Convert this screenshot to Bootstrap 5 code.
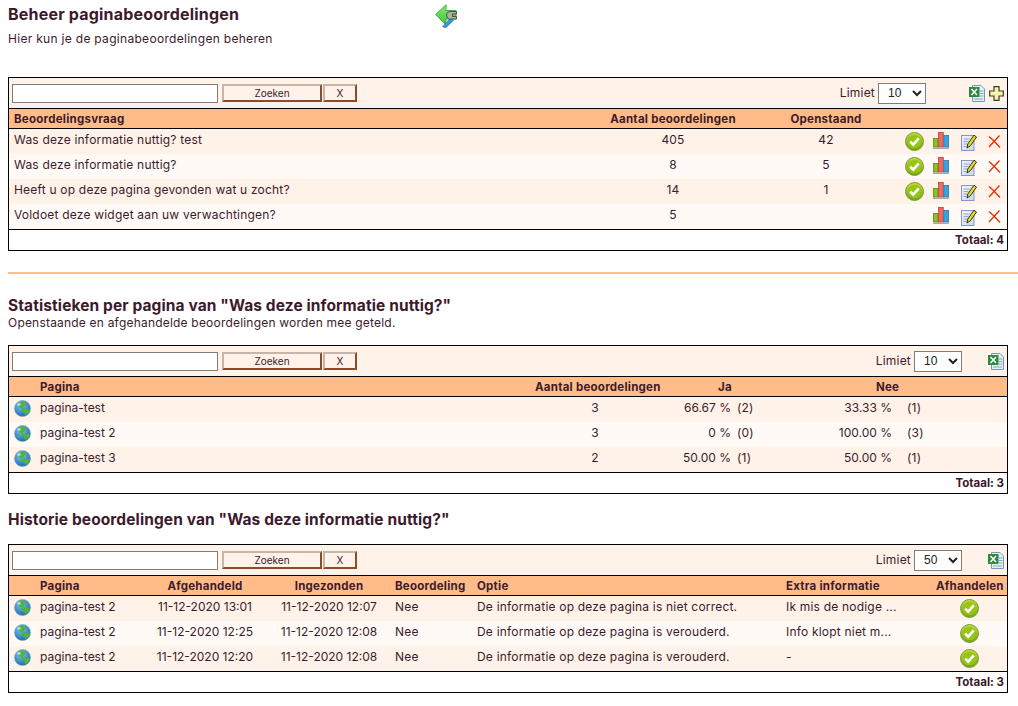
<!DOCTYPE html>
<html lang="nl"><head><meta charset="utf-8"><title>Beheer paginabeoordelingen</title>
<link href="https://cdn.jsdelivr.net/npm/bootstrap@5.3.0/dist/css/bootstrap.min.css" rel="stylesheet">
<style>
body{background:#fff;color:#3c1a2c;font-family:Inter,"Noto Sans",sans-serif;font-size:12px;letter-spacing:.2px;line-height:14px;padding:0 0 0 8px;margin:0;overflow:hidden}
.page-top{height:77px}
.top-head{width:427px}
.ttl{font-size:16px;font-weight:700;letter-spacing:.2px;line-height:20px;margin:0;padding-top:4px}
.ttl2{font-size:15.5px;font-weight:700;letter-spacing:.1px;line-height:20px;margin:0}
.sub{line-height:14px;margin-top:8px;letter-spacing:.3px}
.sep{height:2px;background:#ffbe8c;margin:21px 0 0 0;border:0;opacity:1}
.pane{width:1000px;border:1px solid #000;background:#fff}
.tools{height:31px;background:#fff2e8;border-bottom:1px solid #000;padding:0 3px}
.qbox{width:206px;height:19px;border:1px solid #807c7c;background:#fff;padding:0;margin-right:4px}
.qbtn{height:18px;background:#fff2e8;border:2px solid;border-color:#c8b4a8 #8c4c2c #8c4c2c #c8b4a8;color:#3c1a2c;font-size:10px;line-height:12px;padding:0;font-family:inherit;margin-right:1px}
.w100{width:100px}.w34{width:34px}
.lim{height:21px;width:48px;margin-left:3px;border:1px solid #807c7c;background:#fff;color:#222;font-family:"Liberation Sans",sans-serif;font-size:12px;letter-spacing:0;padding:0 0 0 5px}
.gap-a{margin-left:43px;margin-right:4px}
.gap-b{margin-left:26px}
.grid-t{width:100%;table-layout:fixed;border-collapse:separate;border-spacing:0}
.grid-t th{background:#ffbc88;height:20px;padding:0 5px;font-weight:700;font-size:11.5px;letter-spacing:.25px;border-bottom:1px solid #000;white-space:nowrap;overflow:visible}
.grid-t td{height:25px;padding:0 5px 3px;white-space:nowrap;overflow:hidden;vertical-align:middle}
.grid-t tr:nth-child(odd) td{background:#fff2e8}
.grid-t tr:nth-child(even) td{background:#fffaf6}
.grid-t td.ic0{padding:0 0 2px 5px}
.grid-t td.acts{padding:0 6px 0 0;overflow:visible}
.grid-t td.ic-c{padding:0;overflow:visible}
.grid-t .shift-c{padding-left:7px;padding-right:3px}
.plain{letter-spacing:0}
.t-foot{height:21px;border-top:1px solid #000;text-align:right;font-weight:700;letter-spacing:0;font-size:11.5px;padding:3px 3px 0 0;line-height:14px}
.sec-head{margin-top:22px}
.sec-sub{line-height:14px;margin-top:0;margin-bottom:15px}
.ico{display:block;flex:none}
.act-row{display:flex;align-items:center;justify-content:flex-end}
.g9{margin-left:9px}.g12{margin-left:12px}.g11{margin-left:11px}
.up3{margin-bottom:3px}
.dn1{margin-top:1px}
.pct{display:inline-block;text-align:right;letter-spacing:0}
.pj{width:66px}.pn{width:97px}
.cnt{display:inline-block;margin-left:6px}
.cnt2{display:inline-block;margin-left:15px}
.sec3{margin-top:16px}
.sec3 .ttl2{margin-bottom:14px}
</style></head><body>
<svg width="0" height="0" class="position-absolute">
<defs>
<linearGradient id="gc" x1="0" y1="0" x2="0" y2="1"><stop offset="0" stop-color="#c4dc34"/><stop offset="1" stop-color="#6fa50f"/></linearGradient>
<radialGradient id="gg" cx=".4" cy=".3" r=".75"><stop offset="0" stop-color="#7cc8f4"/><stop offset="1" stop-color="#1766ac"/></radialGradient>
<linearGradient id="gn" x1="0" y1="0" x2="1" y2="1"><stop offset="0" stop-color="#f2f6fc"/><stop offset="1" stop-color="#c4d6ee"/></linearGradient>
<linearGradient id="ga" x1="0" y1="0" x2="0" y2="1"><stop offset="0" stop-color="#86ec64"/><stop offset="1" stop-color="#3cc244"/></linearGradient>
<symbol id="i-ok" viewBox="0 0 19 19"><circle cx="9.500" cy="9.500" r="9" fill="url(#gc)" stroke="#7d9c3a"/><circle cx="9.500" cy="9.500" r="6.800" fill="#97c418"/><path d="M5.200 9.700l3 3 5.600-6.400" fill="none" stroke="#fff" stroke-width="2.600"/></symbol>
<symbol id="i-bar" viewBox="0 0 16 17"><rect x=".4" y="6.500" width="4.600" height="8.500" fill="#8cc21f" stroke="#5d8a18" stroke-width=".8"/><rect x="5.500" y=".5" width="4.800" height="14.500" fill="#f4685a" stroke="#b8483c" stroke-width=".8"/><rect x="10.800" y="3.500" width="4.800" height="11.500" fill="#35a5e6" stroke="#2a78a8" stroke-width=".8"/><rect x="0" y="15.500" width="16" height="1.500" fill="#a8a8a8"/></symbol>
<symbol id="i-note" viewBox="0 0 16 17"><rect x=".5" y="1.500" width="12.500" height="15" fill="url(#gn)" stroke="#8a94c4"/><path d="M2.500 5h6M2.500 7.500h5M2.500 10h4M2.500 12.500h3" stroke="#9aa8c8"/><path d="M6 14l.8-4L13 1.200l2.500 1.800-6 8.600z" fill="#ecdc1c" stroke="#1c1c1c" stroke-width=".9"/></symbol>
<symbol id="i-x" viewBox="0 0 13 13"><path d="M1 1.500l5 4.500 6 6.500M11.500 .5L6 6.500 1 12" stroke="#f02c00" stroke-width="1.300" fill="none"/></symbol>
<symbol id="i-xl" viewBox="0 0 16 17"><path d="M3.500.5H12l3.500 3.500V16.500H3.500z" fill="#e6eef8" stroke="#7c96b8"/><path d="M11 6h3.500M11 8.500h3.500M11 11h3.500M5 14h9" stroke="#8ab"/><rect x="0" y="2" width="10.500" height="10" fill="#2d8a3c"/><path d="M2.500 4l5.500 6M8 4l-5.500 6" stroke="#fff" stroke-width="1.500"/></symbol>
<symbol id="i-plus" viewBox="0 0 15 15"><path d="M5 .7h5V5h4.300v5H10v4.300H5V10H.7V5H5z" fill="#f8f2b0" stroke="#3c3c20" stroke-width="1.200"/></symbol>
<symbol id="i-globe" viewBox="0 0 17 17"><circle cx="8.500" cy="8.500" r="8" fill="url(#gg)" stroke="#7ba0b8" stroke-width=".6"/><path d="M6 2c3-1 5-.5 6 1l-1.500 2.500L9 8l2.500 1.500 3.500-1 .8 1.500c-.8 2.500-2.300 4.500-4.800 5l-.8-3-2.500-1-.3-2.500-3-1.500z" fill="#52b33a"/><ellipse cx="5" cy="4.500" rx="2" ry="1.200" fill="#cfeeff" opacity=".7"/></symbol>
<symbol id="i-back" viewBox="0 0 22 24"><path d="M.6 10.500L11 .8V6.500h10v8.500H11v6z" fill="url(#ga)" stroke="#37a83c" stroke-width=".9"/><path d="M7.500 22.500l8-8.500 3 2.500-8 7.500z" fill="#3b97d8" stroke="#2a6fa8" stroke-width=".6"/><path d="M21.500 7.500h-4.500a4 4 0 1 0 0 7.500h4.500v-2.500h-4v-2.500h4z" fill="#a8b0a4" stroke="#3c463c" stroke-width=".9"/></symbol>
</defs></svg>

<div class="page-top d-flex">
  <div class="top-head"><h1 class="ttl">Beheer paginabeoordelingen</h1><div class="sub">Hier kun je de paginabeoordelingen beheren</div></div>
  <svg class="ico mt-1" width="22" height="24"><use href="#i-back"/></svg>
</div>

<section class="pane">
  <div class="tools d-flex align-items-center">
    <input class="qbox" type="text" aria-label="Zoeken"><button class="qbtn w100">Zoeken</button><button class="qbtn w34">X</button>
    <span class="ms-auto">Limiet</span><select class="lim"><option>10</option></select>
    <svg class="ico gap-a" width="16" height="17"><use href="#i-xl"/></svg><svg class="ico" width="15" height="15"><use href="#i-plus"/></svg>
  </div>
  <table class="grid-t"><colgroup><col style="width:586px"><col style="width:156px"><col style="width:150px"><col></colgroup>
    <thead><tr><th>Beoordelingsvraag</th><th class="text-center">Aantal beoordelingen</th><th class="text-center">Openstaand</th><th></th></tr></thead>
    <tbody>
    <tr><td>Was deze informatie nuttig? test</td><td class="text-center">405</td><td class="text-center">42</td><td class="acts"><div class="act-row"><svg class="ico" width="19" height="19"><use href="#i-ok"/></svg><svg class="ico g9 up3" width="16" height="17"><use href="#i-bar"/></svg><svg class="ico g12 dn1" width="16" height="17"><use href="#i-note"/></svg><svg class="ico g11" width="13" height="13"><use href="#i-x"/></svg></div></td></tr>
    <tr><td>Was deze informatie nuttig?</td><td class="text-center">8</td><td class="text-center">5</td><td class="acts"><div class="act-row"><svg class="ico" width="19" height="19"><use href="#i-ok"/></svg><svg class="ico g9 up3" width="16" height="17"><use href="#i-bar"/></svg><svg class="ico g12 dn1" width="16" height="17"><use href="#i-note"/></svg><svg class="ico g11" width="13" height="13"><use href="#i-x"/></svg></div></td></tr>
    <tr><td>Heeft u op deze pagina gevonden wat u zocht?</td><td class="text-center">14</td><td class="text-center">1</td><td class="acts"><div class="act-row"><svg class="ico" width="19" height="19"><use href="#i-ok"/></svg><svg class="ico g9 up3" width="16" height="17"><use href="#i-bar"/></svg><svg class="ico g12 dn1" width="16" height="17"><use href="#i-note"/></svg><svg class="ico g11" width="13" height="13"><use href="#i-x"/></svg></div></td></tr>
    <tr><td>Voldoet deze widget aan uw verwachtingen?</td><td class="text-center">5</td><td></td><td class="acts"><div class="act-row"><svg class="ico up3" width="16" height="17"><use href="#i-bar"/></svg><svg class="ico g12 dn1" width="16" height="17"><use href="#i-note"/></svg><svg class="ico g11" width="13" height="13"><use href="#i-x"/></svg></div></td></tr>
    </tbody></table>
  <div class="t-foot">Totaal: 4</div>
</section>

<hr class="sep">

<div class="sec-head"><h2 class="ttl2">Statistieken per pagina van "Was deze informatie nuttig?"</h2><div class="sec-sub">Openstaande en afgehandelde beoordelingen worden mee geteld.</div></div>
<section class="pane">
  <div class="tools d-flex align-items-center">
    <input class="qbox" type="text" aria-label="Zoeken"><button class="qbtn w100">Zoeken</button><button class="qbtn w34">X</button>
    <span class="ms-auto">Limiet</span><select class="lim"><option>10</option></select>
    <svg class="ico gap-b" width="16" height="17"><use href="#i-xl"/></svg>
  </div>
  <table class="grid-t"><colgroup><col style="width:26px"><col style="width:495px"><col style="width:130px"><col style="width:130px"><col style="width:195px"><col></colgroup>
    <thead><tr><th></th><th>Pagina</th><th class="text-center">Aantal beoordelingen</th><th class="text-center">Ja</th><th class="text-center">Nee</th><th></th></tr></thead>
    <tbody>
    <tr><td class="ic0"><svg class="ico" width="17" height="17"><use href="#i-globe"/></svg></td><td class="plain">pagina-test</td><td class="text-center">3</td><td><span class="pct pj">66.67 %</span><span class="cnt">(2)</span></td><td><span class="pct pn">33.33 %</span><span class="cnt2">(1)</span></td><td></td></tr>
    <tr><td class="ic0"><svg class="ico" width="17" height="17"><use href="#i-globe"/></svg></td><td class="plain">pagina-test 2</td><td class="text-center">3</td><td><span class="pct pj">0 %</span><span class="cnt">(0)</span></td><td><span class="pct pn">100.00 %</span><span class="cnt2">(3)</span></td><td></td></tr>
    <tr><td class="ic0"><svg class="ico" width="17" height="17"><use href="#i-globe"/></svg></td><td class="plain">pagina-test 3</td><td class="text-center">2</td><td><span class="pct pj">50.00 %</span><span class="cnt">(1)</span></td><td><span class="pct pn">50.00 %</span><span class="cnt2">(1)</span></td><td></td></tr>
    </tbody></table>
  <div class="t-foot">Totaal: 3</div>
</section>

<div class="sec3"><h2 class="ttl2">Historie beoordelingen van "Was deze informatie nuttig?"</h2></div>
<section class="pane">
  <div class="tools d-flex align-items-center">
    <input class="qbox" type="text" aria-label="Zoeken"><button class="qbtn w100">Zoeken</button><button class="qbtn w34">X</button>
    <span class="ms-auto">Limiet</span><select class="lim"><option>50</option></select>
    <svg class="ico gap-b" width="16" height="17"><use href="#i-xl"/></svg>
  </div>
  <table class="grid-t"><colgroup><col style="width:26px"><col style="width:111px"><col style="width:118px"><col style="width:126px"><col style="width:82px"><col style="width:309px"><col style="width:150px"><col></colgroup>
    <thead><tr><th></th><th>Pagina</th><th class="text-center">Afgehandeld</th><th class="text-center shift-c">Ingezonden</th><th>Beoordeling</th><th>Optie</th><th>Extra informatie</th><th class="text-center">Afhandelen</th></tr></thead>
    <tbody>
    <tr><td class="ic0"><svg class="ico" width="17" height="17"><use href="#i-globe"/></svg></td><td class="plain">pagina-test 2</td><td class="text-center plain">11-12-2020 13:01</td><td class="text-center plain shift-c">11-12-2020 12:07</td><td>Nee</td><td>De informatie op deze pagina is niet correct.</td><td>Ik mis de nodige ...</td><td class="ic-c"><div class="d-flex justify-content-center"><svg class="ico" width="19" height="19"><use href="#i-ok"/></svg></div></td></tr>
    <tr><td class="ic0"><svg class="ico" width="17" height="17"><use href="#i-globe"/></svg></td><td class="plain">pagina-test 2</td><td class="text-center plain">11-12-2020 12:25</td><td class="text-center plain shift-c">11-12-2020 12:08</td><td>Nee</td><td>De informatie op deze pagina is verouderd.</td><td>Info klopt niet m...</td><td class="ic-c"><div class="d-flex justify-content-center"><svg class="ico" width="19" height="19"><use href="#i-ok"/></svg></div></td></tr>
    <tr><td class="ic0"><svg class="ico" width="17" height="17"><use href="#i-globe"/></svg></td><td class="plain">pagina-test 2</td><td class="text-center plain">11-12-2020 12:20</td><td class="text-center plain shift-c">11-12-2020 12:08</td><td>Nee</td><td>De informatie op deze pagina is verouderd.</td><td>-</td><td class="ic-c"><div class="d-flex justify-content-center"><svg class="ico" width="19" height="19"><use href="#i-ok"/></svg></div></td></tr>
    </tbody></table>
  <div class="t-foot">Totaal: 3</div>
</section>
</body></html>
